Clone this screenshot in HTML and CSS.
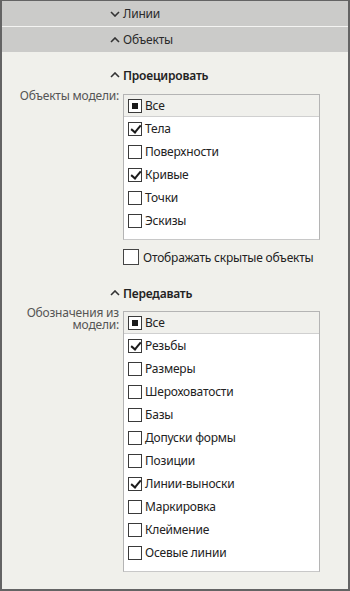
FILE: index.html
```html
<!DOCTYPE html>
<html lang="ru">
<head>
    <meta charset="UTF-8">
    <meta name="viewport" content="width=device-width, initial-scale=1.0">
    <title>Объекты</title>
    <link rel="stylesheet" href="styles.css">
</head>
<body>
    <div class="panel">
        <div class="bar bar-sep">
            <svg class="chev" viewBox="0 0 10 6"><polyline points="1,1 5,5 9,1"/></svg>
            <span>Линии</span>
        </div>
        <div class="bar">
            <svg class="chev" viewBox="0 0 10 6"><polyline points="1,5 5,1 9,5"/></svg>
            <span>Объекты</span>
        </div>

        <div class="body">
            <!-- Проецировать -->
            <div class="group">
                <div class="group-title">
                    <svg class="chev" viewBox="0 0 10 6"><polyline points="1,5 5,1 9,5"/></svg>
                    <span>Проецировать</span>
                </div>
                <div class="field">
                    <div class="field-label">Объекты модели:</div>
                    <div class="listbox">
                        <div class="list-head"><span class="cb cb-mixed"></span>Все</div>
                        <ul class="list-items">
                            <li><span class="cb cb-on"></span>Тела</li>
                            <li><span class="cb"></span>Поверхности</li>
                            <li><span class="cb cb-on"></span>Кривые</li>
                            <li><span class="cb"></span>Точки</li>
                            <li><span class="cb"></span>Эскизы</li>
                        </ul>
                    </div>
                </div>
                <div class="option"><span class="cb cb-big"></span>Отображать скрытые объекты</div>
            </div>

            <!-- Передавать -->
            <div class="group group-next">
                <div class="group-title">
                    <svg class="chev" viewBox="0 0 10 6"><polyline points="1,5 5,1 9,5"/></svg>
                    <span>Передавать</span>
                </div>
                <div class="field">
                    <div class="field-label">Обозначения из модели:</div>
                    <div class="listbox">
                        <div class="list-head"><span class="cb cb-mixed"></span>Все</div>
                        <ul class="list-items">
                            <li><span class="cb cb-on"></span>Резьбы</li>
                            <li><span class="cb"></span>Размеры</li>
                            <li><span class="cb"></span>Шероховатости</li>
                            <li><span class="cb"></span>Базы</li>
                            <li><span class="cb"></span>Допуски формы</li>
                            <li><span class="cb"></span>Позиции</li>
                            <li><span class="cb cb-on"></span>Линии-выноски</li>
                            <li><span class="cb"></span>Маркировка</li>
                            <li><span class="cb"></span>Клеймение</li>
                            <li><span class="cb"></span>Осевые линии</li>
                        </ul>
                    </div>
                </div>
            </div>
        </div>
    </div>
</body>
</html>
```

FILE: styles.css
```css
* {
    box-sizing: border-box;
}
body {
    margin: 0;
    font-family: 'Noto Sans', 'Open Sans', sans-serif;
    font-size: 12px;
    letter-spacing: -0.2px;
    color: #222;
}
.panel {
    width: 350px;
    height: 591px;
    border: 2px solid #646464;
    border-top-width: 1px;
    background: #f0f0eb;
    overflow: hidden;
}
.bar {
    height: 25px;
    background: #cbcbc9;
    display: flex;
    align-items: center;
    gap: 3px;
    padding-left: 108px;
    color: #2a2a2a;
}
.bar-sep {
    height: 26px;
    border-bottom: 1px solid #f4f4f2;
}
.chev {
    width: 10px;
    height: 6px;
    fill: none;
    stroke: #333;
    stroke-width: 1.6;
}
.body {
    padding-top: 15px;
}
.group-title {
    height: 16px;
    display: flex;
    align-items: center;
    gap: 3px;
    padding-left: 108px;
    margin-bottom: 11px;
    font-weight: 600;
    color: #222;
}
.group-next {
    margin-top: 20px;
}
.group-next .group-title {
    margin-bottom: 10px;
}
.field {
    display: grid;
    grid-template-columns: 117px 197px;
    column-gap: 4px;
}
.field-label {
    text-align: right;
    line-height: 12px;
    margin-top: -4px;
    color: #555;
}
.listbox {
    background: #fff;
    border: 1px solid #b4b4b4;
    border-bottom-color: #c8c8c8;
}
.list-head {
    height: 22px;
    background: #f0f0ec;
    border-bottom: 1px solid #d0d0d0;
    display: flex;
    align-items: center;
    gap: 3px;
    padding-left: 4px;
}
.list-items {
    list-style: none;
    margin: 0;
    padding: 0 0 7px 4px;
}
.list-items li {
    height: 23px;
    display: flex;
    align-items: center;
    gap: 3px;
}
.cb {
    width: 14px;
    height: 14px;
    border: 1px solid #3a3a3a;
    background: #fff;
    position: relative;
    flex-shrink: 0;
}
.cb-big {
    width: 16px;
    height: 16px;
    border-color: #444;
}
.cb-mixed::after {
    content: "";
    position: absolute;
    left: 3px;
    top: 3px;
    width: 6px;
    height: 6px;
    background: #1a1a1a;
}
.cb-on::after {
    content: "";
    position: absolute;
    left: 4px;
    top: 0px;
    width: 4px;
    height: 8px;
    border-right: 2px solid #1a1a1a;
    border-bottom: 2px solid #1a1a1a;
    transform: rotate(40deg);
}
.option {
    margin: 9px 0 0 121px;
    display: flex;
    align-items: center;
    gap: 4px;
    height: 16px;
}
```
